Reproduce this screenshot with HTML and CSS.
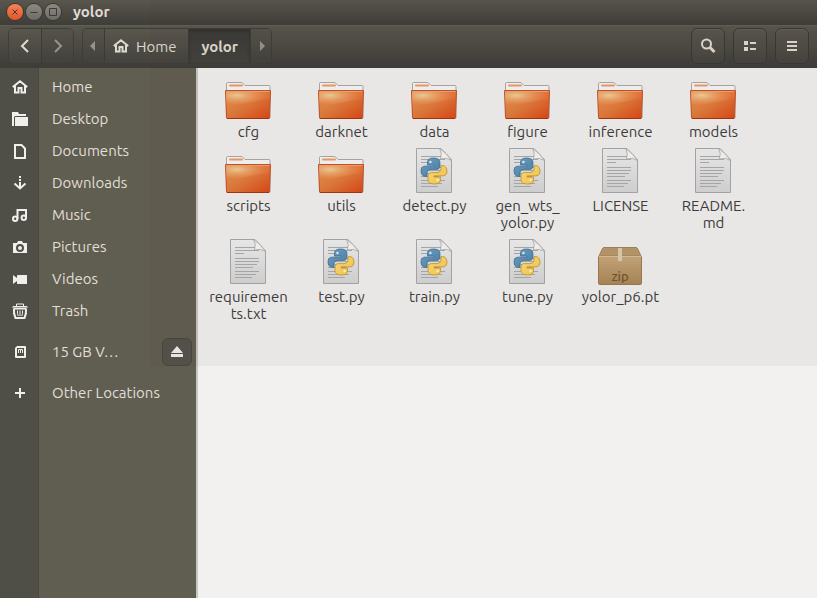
FILE: index.html
```html
<!DOCTYPE html>
<html lang="en">
<head>
<meta charset="utf-8">
<title>yolor</title>
<link rel="stylesheet" href="styles.css">
</head>
<body>
<svg class="defs" aria-hidden="true">
  <defs>
    <linearGradient id="g-folder" x1="0" y1="0" x2="1" y2="1">
      <stop offset="0" stop-color="#e69a50"/><stop offset=".5" stop-color="#e17a3a"/><stop offset="1" stop-color="#dd4614"/>
    </linearGradient>
    <radialGradient id="g-shine" cx=".25" cy=".3" r=".85">
      <stop offset="0" stop-color="#f2d59a" stop-opacity=".95"/><stop offset="1" stop-color="#f0642c" stop-opacity=".3"/>
    </radialGradient>
    <linearGradient id="g-page" x1="0" y1="0" x2="0" y2="1">
      <stop offset="0" stop-color="#f0f0f0"/><stop offset="1" stop-color="#d6d6d6"/>
    </linearGradient>
    <linearGradient id="g-fold" x1="0" y1="1" x2="1" y2="0">
      <stop offset="0" stop-color="#fff"/><stop offset=".5" stop-color="#f4f4f4"/><stop offset="1" stop-color="#bcbcbc"/>
    </linearGradient>
    <linearGradient id="g-blue" x1="0" y1="0" x2="1" y2="1">
      <stop offset="0" stop-color="#6fa3c8"/><stop offset="1" stop-color="#4a82ac"/>
    </linearGradient>
    <linearGradient id="g-yellow" x1="1" y1="1" x2="0" y2="0">
      <stop offset="0" stop-color="#ffe080"/><stop offset="1" stop-color="#f8c945"/>
    </linearGradient>
    <linearGradient id="g-box" x1="0" y1="0" x2="0" y2="1">
      <stop offset="0" stop-color="#c8a87a"/><stop offset="1" stop-color="#a98755"/>
    </linearGradient>
  </defs>
  <symbol id="folder" viewBox="0 0 48 48">
    <path d="M2.500 46V11.500q0-1 1-1H17q1.500 0 2.500 1.500l1.500 1.500h24q1 0 1 1V46z" fill="#f7f7f6" stroke="#aaa9a6"/>
    <path d="M6 13.500h12" stroke="#ef9a69" stroke-width="2" stroke-linecap="round"/>
    <path d="M1.500 18.500h45l-1 27q0 1-1 1h-41q-1 0-1-1z" fill="url(#g-folder)" stroke="#c4512a"/>
    <path d="M2 19h44l-.4 8C32 28 20 33 2.500 34z" fill="url(#g-shine)"/>
    <path d="M2.500 19.500h43" stroke="#f3a46e"/>
    <path d="M3 46.500h42" stroke="#a8330b"/>
  </symbol>
  <symbol id="page" viewBox="0 0 48 48">
    <path d="M6.500 2.500H31l10.500 11V46.500h-35z" fill="url(#g-page)" stroke="#a8a8a8"/>
    <path d="M11 10.500h20M11 13.500h24M11 16.500h9M11 21.500h24M11 24.500h24M11 27.500h22M11 30.500h18M11 34.500h24M11 37.500h21M11 40.500h17" stroke="#ababab"/>
    <path d="M29.500 2.500q3 4.500 1 10.500 6-2 11 1.500Q37 7 29.500 2.500z" fill="url(#g-fold)" stroke="#aaa" stroke-width=".8"/>
  </symbol>
  <symbol id="python" viewBox="0 0 48 48">
    <use href="#page"/>
    <g transform="translate(10.500 11.500) scale(1.080)">
      <path d="M12 .5C8 .5 6.500 2 6.500 4.500V7H12.500v1H4.500C1.500 8 .5 10 .5 12.500S1.800 17.500 4.500 17.500h1.500v-3C6 12.300 7.800 11 10 11h5c2 0 3-1.500 3-3V4.500C18 2 16 .5 12 .5Z" fill="url(#g-blue)" stroke="#356b95" stroke-width=".7"/>
      <path d="M12 .5C8 .5 6.500 2 6.500 4.500V7H12.500v1H4.500C1.500 8 .5 10 .5 12.500S1.800 17.500 4.500 17.500h1.500v-3C6 12.300 7.800 11 10 11h5c2 0 3-1.500 3-3V4.500C18 2 16 .5 12 .5Z" transform="rotate(180 12.500 12.500)" fill="url(#g-yellow)" stroke="#bf8d22" stroke-width=".7"/>
      <circle cx="9.200" cy="4.200" r="1.100" fill="#e9f2f8"/><circle cx="15.800" cy="20.800" r="1.100" fill="#fff8dc"/>
    </g>
  </symbol>
  <symbol id="home" viewBox="0 0 16 16">
    <path d="M.8 8 8 2.200 15.200 8M3 7v6.500h3.500V9h3v4.500H13V7" fill="none" stroke="currentColor" stroke-width="2"/>
  </symbol>
</svg>

<div class="window">
  <header class="titlebar">
    <div class="controls">
      <button class="control close" aria-label="Close"><svg viewBox="0 0 16 16"><path d="m5.500 5.500 5 5m0-5-5 5"/></svg></button>
      <button class="control" aria-label="Minimize"><svg viewBox="0 0 16 16"><path d="M4.500 8.500h7"/></svg></button>
      <button class="control" aria-label="Maximize"><svg viewBox="0 0 16 16"><path d="M4.500 4.500h7v7h-7z"/></svg></button>
    </div>
    <h1>yolor</h1>
  </header>

  <div class="toolbar">
    <div class="group">
      <button class="tool" aria-label="Back"><svg class="icon" viewBox="0 0 16 16"><path d="M11 2 5 8l6 6" class="line"/></svg></button>
      <button class="tool dim" aria-label="Forward"><svg class="icon" viewBox="0 0 16 16"><path d="m5 2 6 6-6 6" class="line"/></svg></button>
    </div>
    <nav class="group path" aria-label="Location">
      <button class="tool arrow dim" aria-label="Scroll left"><svg class="icon" viewBox="0 0 16 16"><path d="M9 3v10L4 8z" fill="currentColor"/></svg></button>
      <button class="tool crumb"><svg class="icon"><use href="#home"/></svg>Home</button>
      <button class="tool crumb current">yolor</button>
      <button class="tool arrow dim" aria-label="Scroll right"><svg class="icon" viewBox="0 0 16 16"><path d="M7 3v10l5-5z" fill="currentColor"/></svg></button>
    </nav>
    <div class="actions">
      <button class="tool boxed" aria-label="Search"><svg class="icon" viewBox="0 0 16 16"><circle cx="6.500" cy="6" r="4.500" class="line"/><path d="m9.500 9 5 5" class="line thick"/></svg></button>
      <button class="tool boxed" aria-label="View as list"><svg class="icon" viewBox="0 0 16 16"><path d="M2 3h4v4H2zM2 9h4v4H2zM8 4h6v2H8zM8 10h6v2H8z" fill="currentColor"/></svg></button>
      <button class="tool boxed" aria-label="Menu"><svg class="icon" viewBox="0 0 16 16"><path d="M3 3h10v2H3zM3 7h10v2H3zM3 11h10v2H3z" fill="currentColor"/></svg></button>
    </div>
  </div>

  <div class="main">
    <aside class="sidebar">
      <ul>
        <li><a href="#"><svg class="icon"><use href="#home"/></svg><span>Home</span></a></li>
        <li><a href="#"><svg class="icon" viewBox="0 0 16 16"><path d="M0 1h6l1 2h7v2H3L2 6v9H0z" fill="currentColor"/><path d="M3 6h13v9H3z" fill="currentColor"/></svg><span>Desktop</span></a></li>
        <li><a href="#"><svg class="icon" viewBox="0 0 16 16"><path d="M3 2h6.500L13 5.500V15H3z" class="line"/></svg><span>Documents</span></a></li>
        <li><a href="#"><svg class="icon" viewBox="0 0 16 16"><path d="M7 1h2v2H7zM7 4h2v2H7zM7 7h2v5H7z" fill="currentColor"/><path d="m2.500 8.500 5.500 5 5.500-5" class="line"/></svg><span>Downloads</span></a></li>
        <li><a href="#"><svg class="icon" viewBox="0 0 16 16"><circle cx="3.200" cy="11.800" r="2.200" class="line"/><circle cx="11.800" cy="10.800" r="2.200" class="line"/><path d="M5.500 12V3H14v8" class="line"/></svg><span>Music</span></a></li>
        <li><a href="#"><svg class="icon" viewBox="0 0 16 16"><path fill-rule="evenodd" d="M1 4h4l1-2h4l1 2h4v10H1zM8 5a4 4 0 1 0 0 8 4 4 0 0 0 0-8zm0 2a2 2 0 1 1 0 4 2 2 0 0 1 0-4z" fill="currentColor"/></svg><span>Pictures</span></a></li>
        <li><a href="#"><svg class="icon" viewBox="0 0 16 16"><path d="m1 4 4 3V4.500Q5 4 6 4h9v9H6q-1 0-1-.5V10l-4 3z" fill="currentColor"/></svg><span>Videos</span></a></li>
        <li><a href="#"><svg class="icon" viewBox="0 0 16 16"><path d="M1 5V3.500h14V5M4.500 3V1h7v2" class="line thin"/><path d="M1.500 5.500h13M2 6q-.5 5 1.500 9h9q2-4 1.500-9" class="line"/><path d="M5.500 7.500q-.3 3 .7 5.500M8 7.500V13m2.500-5.500q.3 3-.7 5.500" class="line thin"/></svg><span>Trash</span></a></li>
      </ul>
      <ul>
        <li><a href="#"><svg class="icon" viewBox="0 0 16 16"><path fill-rule="evenodd" d="M5 2h8q1 0 1 1v10q0 1-1 1H4q-1 0-1-1V4zM5 4v8h7V4z" fill="currentColor"/><path d="M6.500 9V5.500h2V9m0-3.500h2V9" class="line thin"/></svg><span>15 GB V…</span></a><button class="eject" aria-label="Eject"><svg class="icon" viewBox="0 0 16 16"><path d="m8 2 6 7H2zM2 10h12v3H2z" fill="currentColor"/></svg></button></li>
      </ul>
      <ul>
        <li><a href="#"><svg class="icon" viewBox="0 0 16 16"><path d="M8 3v10M3 8h10" class="line"/></svg><span>Other Locations</span></a></li>
      </ul>
    </aside>

    <main class="files">
      <figure><svg><use href="#folder"/></svg><figcaption>cfg</figcaption></figure>
      <figure><svg><use href="#folder"/></svg><figcaption>darknet</figcaption></figure>
      <figure><svg><use href="#folder"/></svg><figcaption>data</figcaption></figure>
      <figure><svg><use href="#folder"/></svg><figcaption>figure</figcaption></figure>
      <figure><svg><use href="#folder"/></svg><figcaption>inference</figcaption></figure>
      <figure><svg><use href="#folder"/></svg><figcaption>models</figcaption></figure>
      <figure><svg><use href="#folder"/></svg><figcaption>scripts</figcaption></figure>
      <figure><svg><use href="#folder"/></svg><figcaption>utils</figcaption></figure>
      <figure><svg><use href="#python"/></svg><figcaption>detect.py</figcaption></figure>
      <figure><svg><use href="#python"/></svg><figcaption>gen_wts_<br>yolor.py</figcaption></figure>
      <figure><svg><use href="#page"/></svg><figcaption>LICENSE</figcaption></figure>
      <figure><svg><use href="#page"/></svg><figcaption>README.<br>md</figcaption></figure>
      <figure><svg><use href="#page"/></svg><figcaption>requiremen<br>ts.txt</figcaption></figure>
      <figure><svg><use href="#python"/></svg><figcaption>test.py</figcaption></figure>
      <figure><svg><use href="#python"/></svg><figcaption>train.py</figcaption></figure>
      <figure><svg><use href="#python"/></svg><figcaption>tune.py</figcaption></figure>
      <figure>
        <svg viewBox="0 0 48 48">
          <path d="M3 19 6.500 11.500Q7 10.500 8 10.500h32q1 0 1.500 1L45 19z" fill="#b8986b" stroke="#a18358"/>
          <path d="M2.500 19.500h43V46q0 1.500-1.500 1.500H4q-1.500 0-1.500-1.500z" fill="url(#g-box)" stroke="#9b7b4c"/>
          <path d="M3 19.500h42" stroke="#dac198"/>
          <path d="M22 11h4v13h-4z" fill="#dcccb2"/>
          <text x="24" y="44" text-anchor="middle" class="zip-text">zip</text>
        </svg>
        <figcaption>yolor_p6.pt</figcaption>
      </figure>
    </main>
  </div>
  <div class="shade"></div>
</div>
</body>
</html>
```

FILE: styles.css
```css
* { box-sizing: border-box; }

body {
  margin: 0;
  font: 15px/17px Ubuntu, "Noto Sans", sans-serif;
  color: #3c3c3c;
}

.defs { position: absolute; width: 0; height: 0; }

.window {
  position: relative;
  display: flex;
  flex-direction: column;
  min-height: 100vh;
}

button { font: inherit; color: inherit; padding: 0; border: 0; background: none; }

.icon { display: block; width: 16px; height: 16px; flex: none; }
.line { fill: none; stroke: currentColor; stroke-width: 2; }
.thin { stroke-width: 1; }
.thick { stroke-width: 3; }

/* Title bar */
.titlebar {
  display: flex;
  align-items: center;
  gap: 12px;
  height: 25px;
  padding: 0 8px 2px 7px;
  color: #dfdbd2;
  background: linear-gradient(#59564d, #3e3d38);
}
.titlebar h1 { margin: 0; font-size: 15px; font-weight: 700; }
.controls { display: flex; gap: 3px; }
.control {
  width: 16px;
  height: 16px;
  border-radius: 50%;
  background: linear-gradient(#8c8980, #6e6c66);
  box-shadow: 0 0 0 1px #393833;
}
.control svg { display: block; fill: none; stroke: #3c3b37; }
.close { background: linear-gradient(#f68457, #e2542a); }

/* Toolbar */
.toolbar {
  display: flex;
  align-items: center;
  gap: 8px;
  height: 43px;
  padding: 0 8px 2px;
  color: #dfdbd2;
  background: linear-gradient(#59564d, #3d3c38);
  border-top: 1px solid #615e55;
}
.group { display: flex; border: 1px solid #3e3d38; border-radius: 5px; }
.tool {
  display: flex;
  align-items: center;
  justify-content: center;
  gap: 7px;
  width: 32px;
  height: 34px;
  background: linear-gradient(#59564d, #44433e);
}
.group .tool + .tool { border-left: 1px solid #3b3a35; }
.group .tool:first-child { border-radius: 4px 0 0 4px; }
.group .tool:last-child { border-radius: 0 4px 4px 0; }
.tool.dim { color: #97948c; background: linear-gradient(#55524a, #42413c); }
.tool.arrow { width: 21px; }
.tool.crumb { width: auto; padding: 0 12px 0 8px; }
.group .tool.current {
  padding: 0 12px;
  font-weight: 700;
  background: linear-gradient(#3b3a35, #43423d);
  box-shadow: inset 0 2px 3px #302f2b;
}
.actions { display: flex; gap: 8px; margin-left: auto; }
.tool.boxed {
  width: 34px;
  height: 36px;
  border: 1px solid #383733;
  border-radius: 6px;
  box-shadow: inset 0 1px #625f56;
}

/* Places and files */
.main { display: flex; flex: 1; }
.sidebar {
  flex: none;
  width: 198px;
  padding-top: 3px;
  line-height: 18px;
  color: #e2dfd8;
  background: linear-gradient(90deg, #504f47 38px, #484740 38px 39px, #605d51 39px);
  border-right: 2px solid #c8c7c1;
}
.sidebar ul { margin: 0 0 9px; padding: 0; list-style: none; }
.sidebar li { display: flex; align-items: center; height: 32px; padding-right: 4px; }
.sidebar a {
  display: flex;
  flex: 1;
  align-items: center;
  gap: 24px;
  padding-left: 12px;
  color: inherit;
  text-decoration: none;
  white-space: nowrap;
}
.sidebar .icon { color: #f0efeb; }
.eject {
  display: grid;
  place-items: center;
  width: 30px;
  height: 28px;
  border: 1px solid #47463f;
  border-radius: 6px;
  background: #53524a;
}

.files {
  flex: 1;
  display: grid;
  grid-template-columns: repeat(auto-fill, 93px);
  align-content: start;
  row-gap: 6px;
  padding: 4px;
  background: #f2f1ef;
}
.files figure {
  display: flex;
  flex-direction: column;
  align-items: center;
  gap: 3px;
  margin: 0;
  text-align: center;
}
.files figure svg { width: 48px; height: 48px; margin-right: 1px; }
.zip-text { font: 500 13px Ubuntu, "Noto Sans", sans-serif; fill: #705632; }

/* Translucent veil over the upper part of the window */
.shade {
  position: absolute;
  inset: 0 0 auto 150px;
  height: 366px;
  background: rgba(74, 62, 68, .05);
  pointer-events: none;
}
```
